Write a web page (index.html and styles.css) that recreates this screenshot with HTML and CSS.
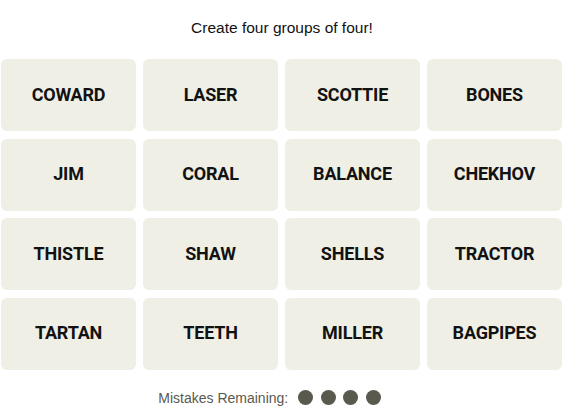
FILE: index.html
```html
<!DOCTYPE html>
<html>
<head>
<meta charset="utf-8">
<link rel="stylesheet" href="styles.css">
</head>
<body>
<div class="game">
  <p class="title">Create four groups of four!</p>
  <div class="board">
    <div class="tile">COWARD</div>
    <div class="tile">LASER</div>
    <div class="tile">SCOTTIE</div>
    <div class="tile">BONES</div>
    <div class="tile">JIM</div>
    <div class="tile">CORAL</div>
    <div class="tile">BALANCE</div>
    <div class="tile">CHEKHOV</div>
    <div class="tile">THISTLE</div>
    <div class="tile">SHAW</div>
    <div class="tile">SHELLS</div>
    <div class="tile">TRACTOR</div>
    <div class="tile">TARTAN</div>
    <div class="tile">TEETH</div>
    <div class="tile">MILLER</div>
    <div class="tile">BAGPIPES</div>
  </div>
  <div class="mistakes">
    <span class="label">Mistakes Remaining:</span>
    <span class="dots"><span class="dot"></span><span class="dot"></span><span class="dot"></span><span class="dot"></span></span>
  </div>
</div>
</body>
</html>
```
FILE: styles.css
```css
html, body {
  margin: 0;
  padding: 0;
  background: #ffffff;
}
.game {
  width: 567px;
  height: 409px;
  font-family: "Liberation Sans", Arial, sans-serif;
  color: #121212;
}
.title {
  margin: 0;
  height: 59px;
  box-sizing: border-box;
  padding-top: 19px;
  padding-right: 3px;
  text-align: center;
  font-size: 15.5px;
  line-height: 18px;
}
.board {
  display: grid;
  grid-template-columns: repeat(4, 135px);
  grid-auto-rows: 72px;
  column-gap: 7px;
  row-gap: 7.5px;
  padding-left: 1px;
}
.tile {
  background: #efefe6;
  border-radius: 6px;
  display: flex;
  align-items: center;
  justify-content: center;
  padding-bottom: 2px;
  box-sizing: border-box;
  font-family: Roboto, "DejaVu Sans Condensed", sans-serif;
  font-weight: 700;
  font-size: 18px;
  letter-spacing: -0.2px;
  color: #121212;
}
.mistakes {
  display: flex;
  justify-content: center;
  align-items: center;
  gap: 10px;
  margin-top: 20px;
  height: 16px;
  padding-right: 28px;
}
.label {
  font-size: 14px;
  color: #5a594e;
}
.dots {
  display: flex;
  gap: 7.5px;
}
.dot {
  width: 15px;
  height: 15px;
  border-radius: 50%;
  background: #5a594e;
}
```
